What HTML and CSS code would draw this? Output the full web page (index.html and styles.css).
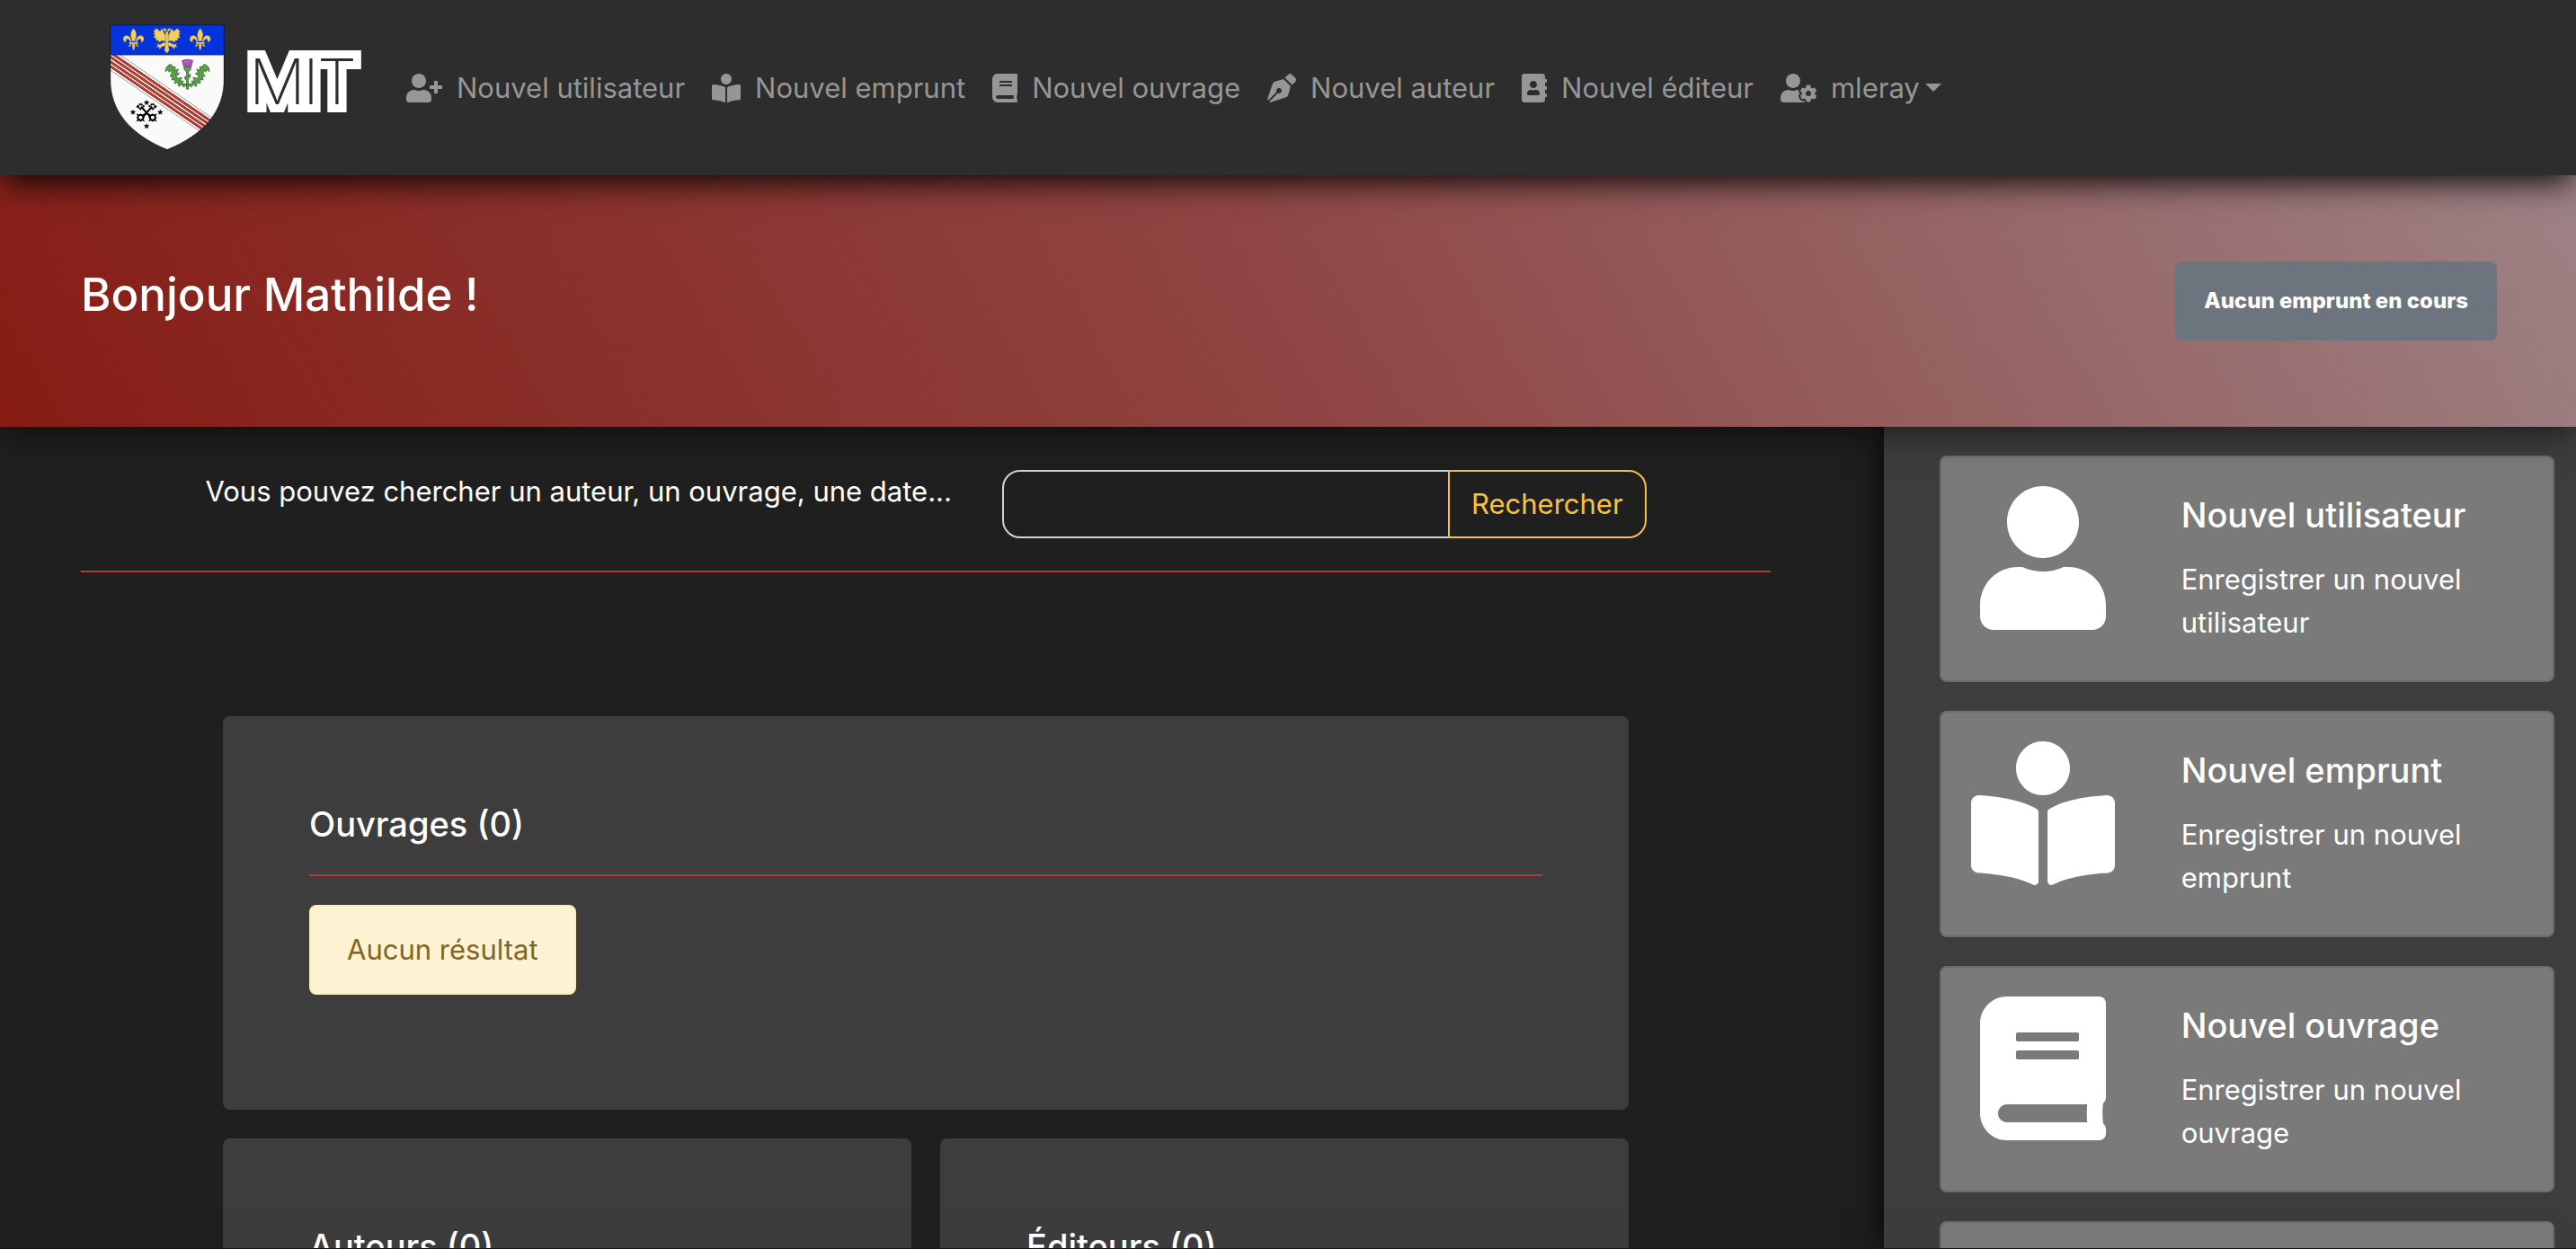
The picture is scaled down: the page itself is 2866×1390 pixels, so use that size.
FILE: index.html
```html
<!DOCTYPE html>
<html lang="fr">
<head>
<meta charset="utf-8">
<title>MIT</title>
<link rel="stylesheet" href="styles.css">
</head>
<body>
<svg class="sprite" aria-hidden="true">
  <symbol id="user" viewBox="0 0 448 512"><path d="M224 256c70.700 0 128-57.300 128-128S294.700 0 224 0 96 57.300 96 128s57.300 128 128 128zm89.600 32h-16.700c-22.200 10.200-46.900 16-72.900 16s-50.600-5.800-72.900-16h-16.700C60.200 288 0 348.200 0 422.400V464c0 26.500 21.500 48 48 48h352c26.500 0 48-21.500 48-48v-41.600c0-74.200-60.200-134.400-134.400-134.400z"/></symbol>
  <symbol id="user-plus" viewBox="0 0 640 512"><path d="M624 208h-64v-64c0-8.800-7.200-16-16-16h-32c-8.800 0-16 7.200-16 16v64h-64c-8.800 0-16 7.200-16 16v32c0 8.800 7.200 16 16 16h64v64c0 8.800 7.200 16 16 16h32c8.800 0 16-7.200 16-16v-64h64c8.800 0 16-7.200 16-16v-32c0-8.800-7.200-16-16-16zm-400 48c70.700 0 128-57.300 128-128S294.700 0 224 0 96 57.300 96 128s57.300 128 128 128zm89.600 32h-16.700c-22.200 10.200-46.900 16-72.900 16s-50.600-5.800-72.900-16h-16.700C60.200 288 0 348.200 0 422.400V464c0 26.500 21.500 48 48 48h352c26.500 0 48-21.500 48-48v-41.600c0-74.200-60.200-134.400-134.400-134.400z"/></symbol>
  <symbol id="book-reader" viewBox="0 0 512 512"><path d="M352 96c0-53.020-42.980-96-96-96s-96 42.980-96 96 42.980 96 96 96 96-42.980 96-96zM233.590 241.100c-59.330-36.320-155.430-46.300-203.790-49.050C13.550 191.130 0 203.510 0 219.140v222.800c0 14.330 11.590 26.280 26.490 27.050 43.660 2.290 131.990 10.680 193.040 41.430 9.370 4.720 20.480-1.710 20.480-11.870V252.560c-.010-4.670-2.320-8.950-6.420-11.460zm248.610-49.050c-48.350 2.740-144.460 12.730-203.780 49.050-4.100 2.510-6.410 6.960-6.410 11.630v245.790c0 10.190 11.140 16.630 20.540 11.900 61.040-30.720 149.320-39.110 192.970-41.400 14.900-.780 26.490-12.730 26.490-27.060V219.140c-.010-15.630-13.560-28.010-29.810-27.090z"/></symbol>
  <symbol id="book" viewBox="0 0 448 512"><path d="M448 360V24c0-13.300-10.700-24-24-24H96C43 0 0 43 0 96v320c0 53 43 96 96 96h328c13.300 0 24-10.700 24-24v-16c0-7.500-3.500-14.300-8.900-18.700-4.200-15.400-4.200-59.300 0-74.700 5.400-4.300 8.900-11.100 8.900-18.600zM128 134c0-3.300 2.700-6 6-6h212c3.300 0 6 2.700 6 6v20c0 3.300-2.700 6-6 6H134c-3.300 0-6-2.700-6-6v-20zm0 64c0-3.300 2.700-6 6-6h212c3.300 0 6 2.700 6 6v20c0 3.300-2.700 6-6 6H134c-3.300 0-6-2.700-6-6v-20zm253.400 250H96c-17.700 0-32-14.300-32-32 0-17.600 14.400-32 32-32h285.400c-1.900 17.100-1.900 46.900 0 64z"/></symbol>
  <symbol id="pen-nib" viewBox="0 0 512 512"><path d="M136.600 138.790a64.003 64.003 0 0 0-43.310 41.350L0 460l14.690 14.690L164.800 324.580c-2.990-6.260-4.800-13.180-4.800-20.580 0-26.510 21.490-48 48-48s48 21.490 48 48-21.490 48-48 48c-7.400 0-14.320-1.810-20.580-4.800L37.310 497.310 52 512l279.860-93.290a64.003 64.003 0 0 0 41.350-43.310L416 224 288 96l-151.400 42.790zm361.340-64.620l-60.110-60.110c-18.750-18.750-49.160-18.750-67.910 0l-56.550 56.550 128.020 128.020 56.550-56.550c18.750-18.750 18.750-49.150 0-67.910z"/></symbol>
  <symbol id="address-book" viewBox="0 0 448 512"><path d="M436 160c6.600 0 12-5.400 12-12v-40c0-6.600-5.400-12-12-12h-20V48c0-26.500-21.500-48-48-48H48C21.500 0 0 21.500 0 48v416c0 26.500 21.500 48 48 48h320c26.500 0 48-21.500 48-48v-48h20c6.600 0 12-5.400 12-12v-40c0-6.600-5.400-12-12-12h-20v-64h20c6.600 0 12-5.400 12-12v-40c0-6.600-5.400-12-12-12h-20v-64h20zm-228-32c35.300 0 64 28.700 64 64s-28.700 64-64 64-64-28.700-64-64 28.700-64 64-64zm112 236.800c0 10.600-10 19.200-22.400 19.200H118.400C106 384 96 375.400 96 364.800v-19.200c0-31.800 30.100-57.600 67.200-57.600h5c12.300 5.100 25.700 8 39.800 8s27.600-2.900 39.800-8h5c37.100 0 67.200 25.800 67.200 57.600v19.200z"/></symbol>
  <symbol id="user-cog" viewBox="0 0 640 512"><path d="M610.500 373.300c2.600-14.100 2.600-28.500 0-42.600l25.800-14.900c3-1.700 4.300-5.200 3.300-8.500-6.700-21.600-18.200-41.200-33.200-57.400-2.300-2.500-6-3.100-9-1.400l-25.800 14.900c-10.900-9.300-23.400-16.500-36.900-21.300v-29.800c0-3.400-2.400-6.400-5.700-7.100-22.300-5-45-4.800-66.200 0-3.300.7-5.700 3.700-5.700 7.100v29.800c-13.500 4.800-26 12-36.900 21.300l-25.800-14.900c-2.900-1.700-6.700-1.100-9 1.400-15 16.200-26.500 35.800-33.200 57.400-1 3.300.4 6.800 3.300 8.500l25.800 14.900c-2.600 14.100-2.600 28.500 0 42.600l-25.800 14.900c-3 1.700-4.300 5.200-3.300 8.500 6.700 21.600 18.200 41.100 33.200 57.400 2.300 2.500 6 3.100 9 1.400l25.800-14.900c10.900 9.300 23.400 16.500 36.900 21.300v29.800c0 3.400 2.400 6.400 5.700 7.100 22.300 5 45 4.800 66.200 0 3.300-.7 5.700-3.700 5.700-7.100v-29.800c13.500-4.800 26-12 36.900-21.300l25.800 14.900c2.900 1.700 6.700 1.100 9-1.400 15-16.200 26.500-35.800 33.200-57.400 1-3.300-.4-6.800-3.300-8.500l-25.800-14.900zM496 400.500c-26.800 0-48.500-21.800-48.500-48.500s21.800-48.500 48.500-48.500 48.500 21.800 48.500 48.500-21.700 48.500-48.500 48.500zM224 256c70.700 0 128-57.300 128-128S294.700 0 224 0 96 57.300 96 128s57.300 128 128 128zm201.200 226.500c-2.300-1.200-4.600-2.600-6.800-3.900l-7.900 4.600c-6 3.400-12.800 5.300-19.600 5.300-10.900 0-21.400-4.600-28.900-12.600-18.300-19.800-32.300-43.900-40.200-69.600-5.500-17.700 1.900-36.400 17.900-45.700l7.900-4.600c-.1-2.600-.1-5.200 0-7.800l-7.900-4.600c-16-9.200-23.400-28-17.900-45.700.9-2.900 2.200-5.800 3.200-8.700-3.800-.3-7.500-1.200-11.400-1.200h-16.700c-22.200 10.200-46.900 16-72.900 16s-50.600-5.800-72.900-16h-16.700C60.200 288 0 348.200 0 422.400V464c0 26.500 21.500 48 48 48h352c10.100 0 19.500-3.200 27.200-8.500-1.200-3.800-2-7.700-2-11.800v-9.200z"/></symbol>
</svg>

<header class="navbar">
  <a class="brand" href="#">
    <svg class="shield" viewBox="-2 -2 380 418" aria-hidden="true">
      <defs>
        <clipPath id="shield-clip"><path d="M0 0H376V180C376 280 315 360 188 412C61 360 0 280 0 180Z"/></clipPath>
        <g id="lys">
          <path d="M0-38C10-26 12-14 6-2V4H-6V-2C-12-14-10-26 0-38Z"/>
          <path d="M8 2C10-12 22-18 30-12C38-4 34 8 24 8C28 2 24-4 18-2C14 0 12 4 11 8H8ZM-8 2C-10-12-22-18-30-12C-38-4-34 8-24 8C-28 2-24-4-18-2C-14 0-12 4-11 8H-8Z"/>
          <path d="M-14 8H14V14H-14ZM-5 14H5C5 22 3 30 0 36C-3 30-5 22-5 14ZM7 14C8 20 12 24 17 22C14 16 12 14 7 14ZM-7 14C-8 20-12 24-17 22C-14 16-12 14-7 14Z"/>
        </g>
        <path id="star" d="M0-10L2.500-3H10L4 2L6 9L0 5L-6 9L-4 2L-10-3H-2.500Z"/>
        <g id="wing">
          <path d="M4-14C12-24 12-34 18-38C18-30 20-28 26-30C28-34 32-36 38-38C36-32 38-30 45-30C42-26 38-24 44-18C40-14 36-18 44-8C38-4 34-8 36 2C30 4 28-2 26 8C22 8 20 2 16 4C12 4 8 2 4 6Z"/>
          <path d="M4 8C12 8 18 14 24 16L32 12L30 20L36 24H26L24 32L18 24C12 22 8 20 4 20Z"/>
        </g>
        <g id="thistle-leaf">
          <path d="M0 82C22 82 36 66 38 48C40 34 44 24 56 16L62 18L70 26L73 40L66 34L60 42L54 34L52 46L58 56L49 56L52 68L42 66L42 80L33 75L28 90L20 82L12 92L8 86H0Z"/>
          <path d="M36 54L26 46L36 44L30 32L42 36L40 24L50 26M24 78L12 72L24 70L18 60L32 62" />
        </g>
      </defs>
      <g clip-path="url(#shield-clip)">
        <path fill="#fafafa" d="M0 0H376V412H0Z"/>
        <g class="bend">
          <path class="bend-edge" d="M32 99L340 310M-10 142L350 388"/>
          <path class="bend-line" d="M-10 84L350 330M-10 99L350 345M-10 114L350 360M-10 129L350 375"/>
          <path class="bend-bar" d="M-10 84L350 330M-10 99L350 345M-10 114L350 360M-10 129L350 375"/>
        </g>
        <path fill="#0433dc" d="M0 0H376V99H0Z"/>
        <path stroke="#10163c" stroke-width="2" d="M0 99H376"/>
      </g>
      <g class="gold">
        <use href="#lys" x="77" y="49"/>
        <use href="#lys" x="297" y="49"/>
        <g transform="translate(187 49)">
          <use href="#wing"/>
          <use href="#wing" transform="scale(-1 1)"/>
          <path d="M-4-20L-6-30L-14-32L-8-39L-2-34V-26H2V-34L8-39L14-32L6-30L4-20V14L8 34L0 45L-8 34L-4 14Z"/>
        </g>
      </g>
      <g transform="translate(255 114)">
        <g class="leaf">
          <use href="#thistle-leaf"/>
          <use href="#thistle-leaf" transform="scale(-1 1)"/>
          <path d="M-11 22H11C13 34 8 38 3 40V54L10 48L9 58L3 64V98H-3V70L-9 64L-8 56L-3 58V40C-8 38-13 34-11 22Z"/>
        </g>
        <path fill="#a650b0" stroke="#4f2456" stroke-width="1.500" d="M-18 4C-8-1 8-1 18 4L12 24H-12Z"/>
        <path stroke="#d48add" stroke-width="2" d="M-12 8H12"/>
      </g>
      <g transform="translate(120 292)">
        <g class="keys">
          <path d="M-18-22L16 16M18-22L-16 16"/>
          <path d="M-30-22L-20-32L-10-24L-20-14ZM30-22L20-32L10-24L20-14Z" stroke-dasharray="6 2"/>
        </g>
        <path d="M-34 0L-26 4L-20 0L-14 4L-6 0L-10 10L-6 14L-10 18L-6 28L-14 24L-20 28L-26 24L-34 28L-30 18L-34 14L-30 10ZM34 0L26 4L20 0L14 4L6 0L10 10L6 14L10 18L6 28L14 24L20 28L26 24L34 28L30 18L34 14L30 10Z"/>
        <circle cx="-20" cy="14" r="6" fill="#fafafa"/><circle cx="20" cy="14" r="6" fill="#fafafa"/>
        <use href="#star" y="-36"/><use href="#star" x="-45" y="-4"/><use href="#star" x="45" y="-4"/><use href="#star" y="42"/>
      </g>
      <path fill="none" stroke="#111" stroke-width="2" d="M0 0H376V180C376 280 315 360 188 412C61 360 0 280 0 180Z"/>
    </svg>
    <svg class="wordmark" viewBox="0 0 128 70">
      <defs><text id="mit" y="60"><tspan x="5">M</tspan><tspan x="65">I</tspan><tspan x="81">T</tspan></text></defs>
      <use class="mit-outer" href="#mit"/>
      <use class="mit-inner" href="#mit"/>
    </svg>
  </a>
  <nav class="nav">
    <a class="nav-link" href="#"><svg class="icon wide"><use href="#user-plus"/></svg>Nouvel utilisateur</a>
    <a class="nav-link" href="#"><svg class="icon"><use href="#book-reader"/></svg>Nouvel emprunt</a>
    <a class="nav-link" href="#"><svg class="icon narrow"><use href="#book"/></svg>Nouvel ouvrage</a>
    <a class="nav-link" href="#"><svg class="icon"><use href="#pen-nib"/></svg>Nouvel auteur</a>
    <a class="nav-link" href="#"><svg class="icon narrow"><use href="#address-book"/></svg>Nouvel éditeur</a>
    <a class="nav-link caret" href="#"><svg class="icon wide"><use href="#user-cog"/></svg>mleray</a>
  </nav>
</header>

<section class="hero">
  <h1>Bonjour Mathilde !</h1>
  <span class="badge">Aucun emprunt en cours</span>
</section>

<div class="columns">
  <main class="content">
    <form class="search">
      <label for="q">Vous pouvez chercher un auteur, un ouvrage, une date...</label>
      <div class="input-group">
        <input id="q" type="text">
        <button type="submit">Rechercher</button>
      </div>
    </form>
    <div class="results">
      <section class="panel panel-full">
        <h2>Ouvrages (0)</h2>
        <p class="alert">Aucun résultat</p>
      </section>
      <section class="panel"><h2>Auteurs (0)</h2></section>
      <section class="panel"><h2>Éditeurs (0)</h2></section>
    </div>
  </main>
  <aside class="sidebar">
    <a class="card" href="#">
      <svg class="card-icon"><use href="#user"/></svg>
      <div class="card-body"><h3>Nouvel utilisateur</h3><p>Enregistrer un nouvel utilisateur</p></div>
    </a>
    <a class="card" href="#">
      <svg class="card-icon"><use href="#book-reader"/></svg>
      <div class="card-body"><h3>Nouvel emprunt</h3><p>Enregistrer un nouvel emprunt</p></div>
    </a>
    <a class="card" href="#">
      <svg class="card-icon"><use href="#book"/></svg>
      <div class="card-body"><h3>Nouvel ouvrage</h3><p>Enregistrer un nouvel ouvrage</p></div>
    </a>
    <div class="card"></div>
  </aside>
</div>
<footer class="footer"></footer>
</body>
</html>
```
FILE: styles.css
```css
* { box-sizing: border-box; }

body {
  margin: 0;
  height: 100vh;
  overflow: hidden;
  display: flex;
  flex-direction: column;
  background: #1f1f1f;
  color: #fff;
  font-family: Inter, "Liberation Sans", sans-serif;
  font-size: 31px;
  line-height: 48px;
}

h1, h2, h3, p { margin: 0; font-weight: 400; }
h1, h2, h3 { font-weight: 500; }
a { color: inherit; text-decoration: none; }
.sprite { display: none; }

/* Navigation */
.navbar {
  position: relative;
  z-index: 3;
  flex: none;
  display: flex;
  align-items: center;
  gap: 32px;
  padding: 27px 122px;
  background: #2d2d2d;
  box-shadow: 0 12px 32px -4px rgba(0, 0, 0, .9);
}
.brand { display: flex; align-items: center; gap: 22px; padding-right: 20px; }
.shield { width: 128px; height: 141px; }
.wordmark { width: 128px; height: 70px; margin-bottom: 14px; overflow: visible; }
.wordmark text { font-family: Inter, sans-serif; font-size: 70px; font-weight: 200; }
.mit-outer { fill: #fff; stroke: #fff; stroke-width: 18px; stroke-linejoin: miter; stroke-miterlimit: 2; }
.mit-inner { fill: #2d2d2d; }
.bend-edge { stroke: #222; stroke-width: 2; stroke-dasharray: 4 2; }
.bend-line { stroke: #3a1512; stroke-width: 8; }
.bend-bar { stroke: #cc3a2c; stroke-width: 6; }
.gold { fill: #f0ce62; stroke: #8a7228; stroke-width: 1; }
.leaf { fill: #57a345; stroke: #24551f; stroke-width: 2; }
.keys { fill: none; stroke: #000; stroke-width: 6; }

.nav { display: flex; gap: 30px; color: #969696; }
.nav-link { display: flex; align-items: center; gap: 16px; white-space: nowrap; }
.icon { width: 32px; height: 32px; fill: currentColor; }
.icon.narrow { width: 28px; }
.icon.wide { width: 40px; }
.caret::after {
  content: "";
  margin-left: -10px;
  border: 9px solid transparent;
  border-top-color: currentColor;
  border-bottom: 0;
}

/* Greeting banner */
.hero {
  position: relative;
  z-index: 2;
  flex: none;
  height: 280px;
  display: flex;
  align-items: center;
  justify-content: space-between;
  padding: 0 88px 0 90px;
  background: linear-gradient(60deg, #861c14, #8f4644 50%, #9d8285);
  box-shadow: 0 12px 32px -4px rgba(0, 0, 0, .5);
}
.hero h1 { margin-bottom: 16px; font-size: 51px; line-height: 67px; }
.badge {
  padding: 20px 32px;
  border-radius: 8px;
  background: #6c757d;
  font-size: 24px;
  font-weight: 800;
}

/* Page columns */
.columns {
  flex: 1;
  min-height: 0;
  display: grid;
  grid-template-columns: minmax(0, 1fr) 770px;
}
.content { min-height: 0; padding: 0 126px 0 90px; }
.search {
  display: flex;
  justify-content: center;
  gap: 56px;
  padding: 48px 0 36px;
  border-bottom: 2px solid #b23a3e;
}
.input-group { display: flex; }
.input-group input {
  width: 498px;
  height: 76px;
  padding: 12px 24px;
  border: 2px solid #ced4da;
  border-radius: 20px 0 0 20px;
  background: none;
  color: inherit;
  font: inherit;
}
.input-group button {
  height: 76px;
  padding: 0 24px;
  border: 2px solid #f5c242;
  border-radius: 0 20px 20px 0;
  margin-left: -2px;
  background: none;
  color: #f5c242;
  font: inherit;
}

.results {
  display: grid;
  grid-template-columns: 1fr 1fr;
  gap: 32px;
  padding: 160px 158px 0;
}
.panel { padding: 96px; border-radius: 8px; background: #3d3d3d; }
.panel-full { grid-column: 1 / -1; padding-bottom: 128px; }
.panel h2 {
  padding-bottom: 32px;
  border-bottom: 2px solid #b23a3e;
  font-size: 38px;
}
.alert {
  width: fit-content;
  margin-top: 32px;
  padding: 24px 40px;
  border: 2px solid #feeebb;
  border-radius: 8px;
  background: #fdf2d1;
  color: #83651f;
}

/* Shortcuts */
.sidebar {
  min-height: 0;
  padding: 32px 24px 0 62px;
  background: #3d3d3d;
  box-shadow: 0 0 32px rgba(0, 0, 0, .9);
}
.card {
  display: grid;
  grid-template-columns: 1fr 2fr;
  min-height: 252px;
  margin-bottom: 32px;
  border: 2px solid #6c6c6c;
  border-radius: 8px;
  background: #7a7a7a;
}
.card-icon { width: 160px; height: 160px; margin-top: 32px; justify-self: center; fill: #fff; }
.card-body { padding: 40px; }
.card-body h3 { margin-bottom: 24px; font-size: 38px; }

.footer {
  position: relative;
  z-index: 3;
  flex: none;
  height: 1px;
  background: #1a0f0f;
  box-shadow: 0 -8px 64px rgba(0, 0, 0, .4);
}
```
